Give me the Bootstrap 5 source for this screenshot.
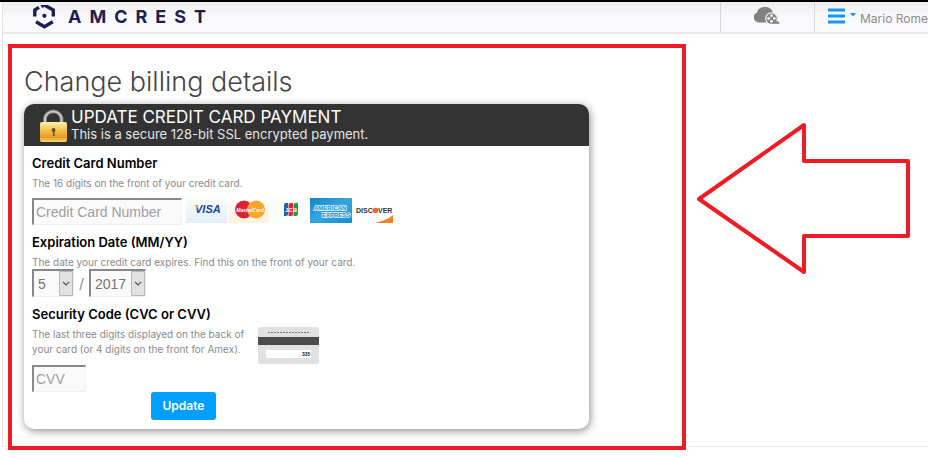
<!DOCTYPE html>
<html lang="en">
<head>
<meta charset="utf-8">
<meta name="viewport" content="width=device-width, initial-scale=1">
<title>Amcrest - Change billing details</title>
<link href="https://cdn.jsdelivr.net/npm/bootstrap@5.3.0/dist/css/bootstrap.min.css" rel="stylesheet">
<style>
  body { font-family: Inter, "Liberation Sans", sans-serif; background: #fff; color: #000; border-top: 2px solid #000; min-height: 100vh; }
  .page { border-left: 1px solid #e3e3e3; margin-left: 2px; }
  .topbar { height: 32px; background: linear-gradient(#ededef, #fafafc 50%); border-bottom: 2px solid #e8e8e9; }
  .brand { color: #1a2150; font-size: 18px; line-height: 20px; font-weight: 700; letter-spacing: 8px; padding-left: 29px; gap: 11px; }
  .cell { border-left: 1px solid #d6d6d8; }
  .cloud-cell { width: 94px; }
  .user-cell { width: 114px; padding-left: 12px; font-size: 12px; color: #8b8b8b; gap: 4px; }
  .user-cell a { color: inherit; line-height: 20px; }
  .icon-btn { line-height: 0; }
  .content { padding: 10px 0 0 5px; border-bottom: 1px solid #ececec; }
  .frame { flex: 0 1 678px; border: 4px solid #ee1c25; padding: 18px 12px 17px; margin-bottom: -4px; }
  .frame h1 { font-size: 27px; line-height: 32px; font-weight: 300; color: #444; margin: 0 0 6px; }
  .pay-card { max-width: 565px; border-radius: 10px; box-shadow: 1px 2px 8px rgba(0,0,0,.45); overflow: hidden; background: #fff; }
  .pay-head { background: #333; color: #fff; height: 42px; padding-left: 15px; gap: 4px; }
  .pay-head h2 { font-size: 17px; line-height: 18px; font-weight: 400; margin: 0; }
  .pay-head p { font-size: 13px; line-height: 16px; font-weight: 400; margin: 0; color: #e4e4e4; }
  .pay-body { padding: 8px; }
  .field-label { display: block; font-size: 13px; line-height: 18px; font-weight: 600; }
  .help { font-size: 10px; line-height: 14px; color: #8a8a8a; margin: 4px 0 0; }
  .field + .field { margin-top: 8px; }
  .sunken { font: 14px/20px "Liberation Sans", Arial, sans-serif; color: #757575; height: 27px; border: 1px solid #f0f0f0; border-top: 2px solid #888; border-left: 2px solid #888; background: #fafafa; border-radius: 0; padding: 0 2px; }
  .sunken::placeholder { color: #a0a0a0; opacity: 1; }
  .number { width: 150px; }
  .cvv { width: 54px; }
  .month { width: 42px; }
  .year { width: 57px; }
  select.sunken { appearance: none; padding-left: 4px; height: 28px; }
  .pick svg { position: absolute; right: 1px; top: 2px; pointer-events: none; }
  .slash { width: 15px; text-align: center; color: #888; font-size: 14px; }
  .cvv-help { max-width: 226px; line-height: 15px; margin: 0; }
  .update { width: 65px; height: 28px; margin: 0 0 1px 119px; background: #009fff; color: #fff; font-size: 12px; line-height: 16px; font-weight: 600; padding: 0; border: 0; border-radius: 3px; }
  .arrow { flex: 0 1 224px; padding: 76px 0 0 10px; }
  svg text { font-family: "Liberation Sans", Arial, sans-serif; }
</style>
</head>
<body>
<div class="page">
  <header class="topbar d-flex align-items-stretch">
    <a href="#" class="brand d-flex align-items-center flex-grow-1 text-decoration-none">
      <svg width="25" height="24" viewBox="0 0 25 24" aria-hidden="true"><g fill="none" stroke="#1a2150" stroke-width="3.400"><path d="M2.800 11.500V5L7 2.400M9.300 1.500L12.300 0l9 5v6.500"/><path d="M4 16.700l8.400 5.100 8.400-5.100"/></g><circle cx="12.400" cy="10.800" r="2.100" fill="#1a2150"/></svg>
      <span>AMCREST</span>
    </a>
    <div class="cell cloud-cell d-flex align-items-center justify-content-center">
      <button class="btn p-0 border-0 icon-btn pe-1" aria-label="Cloud recordings">
        <svg width="30" height="20" viewBox="0 0 30 20"><path d="M7 15.500A5.300 5.300 0 0 1 6 5.500C7 1.500 10 0 14 0c4 0 7 2 8 5.500 3 .5 4.500 3 4.500 5.500v4.500z" fill="#818181"/><circle cx="20.500" cy="11.500" r="6.300" fill="#fafafc"/><path d="M20.500 16.800h8v-1.300l-3.500-1.500" fill="#818181"/><circle cx="20.500" cy="11.500" r="5.200" fill="#818181"/><g fill="#fafafc"><circle cx="20.500" cy="8.700" r="1.400"/><circle cx="20.500" cy="14.300" r="1.400"/><circle cx="17.700" cy="11.500" r="1.400"/><circle cx="23.300" cy="11.500" r="1.400"/></g></svg>
      </button>
    </div>
    <div class="cell user-cell d-flex align-items-center text-nowrap">
      <button class="btn p-0 border-0 icon-btn" aria-label="Menu">
        <svg width="29" height="18" viewBox="0 0 29 18"><path d="M1 2h17M1 8h17M1 14h17" stroke="#1496f3" stroke-width="2.800"/><path d="M23 5h6l-3 3.500z" fill="#1496f3"/></svg>
      </button>
      <a href="#" class="text-decoration-none pt-1">Mario Rome</a>
    </div>
  </header>

  <main class="content d-flex align-items-start">
    <section class="frame">
      <h1>Change billing details</h1>
      <form class="pay-card">
        <div class="pay-head d-flex align-items-center">
          <svg width="28" height="36" viewBox="0 0 28 36" aria-hidden="true">
            <defs><linearGradient id="gold" x2="0" y2="1"><stop stop-color="#fff0b0"/><stop offset=".4" stop-color="#f5c34b"/><stop offset=".75" stop-color="#e89a28"/><stop offset="1" stop-color="#f9d673"/></linearGradient></defs>
            <path d="M6 17V11a8.500 8.500 0 0 1 16.500 0v6" fill="none" stroke="#777" stroke-width="4"/><path d="M6 17V11a8.500 8.500 0 0 1 16.500 0v6" fill="none" stroke="#c9c9c9" stroke-width="2"/>
            <rect x="1" y="15" width="27" height="20" rx="2" fill="url(#gold)"/>
            <circle cx="14.500" cy="23" r="2" fill="#685027"/><path d="M14 23h1.500v6H14z" fill="#685027"/>
          </svg>
          <div>
            <h2>UPDATE CREDIT CARD PAYMENT</h2>
            <p>This is a secure 128-bit SSL encrypted payment.</p>
          </div>
        </div>
        <div class="pay-body">
          <div class="field">
            <label class="field-label" for="number">Credit Card Number</label>
            <p class="help mb-2">The 16 digits on the front of your credit card.</p>
            <div class="d-flex align-items-start gap-1">
              <input id="number" class="sunken number" type="text" placeholder="Credit Card Number">
              <svg width="208" height="25" viewBox="0 0 208 25" role="img" aria-label="Accepted cards">
                <defs>
                  <linearGradient id="amex" x2="1" y2="1"><stop stop-color="#1585c5"/><stop offset=".5" stop-color="#35a7df"/><stop offset="1" stop-color="#168bc9"/></linearGradient>
                  <linearGradient id="pale" x2="0" y2="1"><stop stop-color="#fcfefe"/><stop offset="1" stop-color="#dfeef8"/></linearGradient>
                  <linearGradient id="cream" x2="0" y2="1"><stop stop-color="#fff"/><stop offset="1" stop-color="#fef1dc"/></linearGradient>
                </defs>
                <rect width="41" height="25" fill="url(#pale)"/>
                <text x="9" y="15" font-size="11" font-weight="700" font-style="italic" fill="#17479d">VISA</text><path d="M8 7h3.500l1 4z" fill="#f2a92f"/>
                <rect x="42" width="41" height="25" fill="url(#cream)"/>
                <circle cx="58" cy="11.500" r="9" fill="#db2137"/><circle cx="70" cy="11.500" r="9" fill="#f9a62b"/>
                <text x="64" y="14" font-size="5" font-weight="700" font-style="italic" fill="#fff" text-anchor="middle">MasterCard</text>
                <rect x="84" width="39" height="25" fill="#fafefa"/>
                <path d="M98 7q0-2 2-2h2v11q0 2-2 2h-2z" fill="#1965b0"/><path d="M102.500 7q0-2 2-2h2.500v11q0 2-2 2h-2.500z" fill="#df2735"/><path d="M107.500 7q0-2 2-2h2.500v11q0 2-2 2h-2.500z" fill="#269947"/>
                <text x="105" y="14" font-size="6" font-weight="700" fill="#fff" text-anchor="middle">JCB</text>
                <rect x="124" width="42" height="25" fill="url(#amex)"/>
                <g font-size="6" font-weight="700" fill="#2095d1" stroke="#d8f0fb" stroke-width="1.600" paint-order="stroke"><text x="128" y="12">AMERICAN</text><text x="136" y="19">EXPRESS</text></g>
                <path d="M207 17v8h-19q12-2 19-8z" fill="#f58220"/>
                <g font-size="7" font-weight="700" fill="#333"><text x="170" y="15">DISC</text><text x="192" y="15">VER</text></g><circle cx="189.500" cy="12.500" r="2.800" fill="#f26a21"/>
              </svg>
            </div>
          </div>
          <div class="field">
            <label class="field-label" for="month">Expiration Date (MM/YY)</label>
            <p class="help">The date your credit card expires. Find this on the front of your card.</p>
            <div class="d-flex align-items-center">
              <div class="pick position-relative d-flex">
                <select id="month" class="sunken month"><option>5</option></select>
                <svg width="14" height="25" viewBox="0 0 14 25" aria-hidden="true"><path d="M.5.5h13v24H.5z" fill="#e1e1e1" stroke="#b8b8b8"/><path d="M4 11l3 3 3-3" fill="none" stroke="#555" stroke-width="1.200"/></svg>
              </div>
              <span class="slash">/</span>
              <div class="pick position-relative d-flex">
                <select class="sunken year" aria-label="Expiration year"><option>2017</option></select>
                <svg width="14" height="25" viewBox="0 0 14 25" aria-hidden="true"><path d="M.5.5h13v24H.5z" fill="#e1e1e1" stroke="#b8b8b8"/><path d="M4 11l3 3 3-3" fill="none" stroke="#555" stroke-width="1.200"/></svg>
              </div>
            </div>
          </div>
          <div class="field">
            <label class="field-label" for="cvv">Security Code (CVC or CVV)</label>
            <div class="d-flex align-items-start pt-1">
              <p class="help cvv-help">The last three digits displayed on the back of your card (or 4 digits on the front for Amex).</p>
              <svg width="61" height="38" viewBox="0 0 61 38" aria-hidden="true"><rect width="61" height="37" rx="3" fill="#e1e1e1"/><path d="M0 10h61v8H0z" fill="#4b4b4b"/><path d="M8 23h45v8H8z" fill="#fff"/><path d="M10 5.500h41" stroke="#777" stroke-dasharray="2 1"/><text x="44" y="29" font-size="5" font-weight="700" fill="#222">335</text></svg>
            </div>
            <input id="cvv" class="sunken cvv d-block" type="text" placeholder="CVV">
          </div>
          <button type="button" class="btn update d-block">Update</button>
        </div>
      </form>
    </section>
    <div class="arrow">
      <svg class="d-block w-100" viewBox="0 0 214 156" aria-hidden="true"><path d="M3 79L108 5v36h104v75H108v36z" fill="none" stroke="#ee1c25" stroke-width="4" stroke-linejoin="round"/></svg>
    </div>
  </main>
</div>
<script src="https://cdn.jsdelivr.net/npm/bootstrap@5.3.0/dist/js/bootstrap.bundle.min.js"></script>
</body>
</html>
